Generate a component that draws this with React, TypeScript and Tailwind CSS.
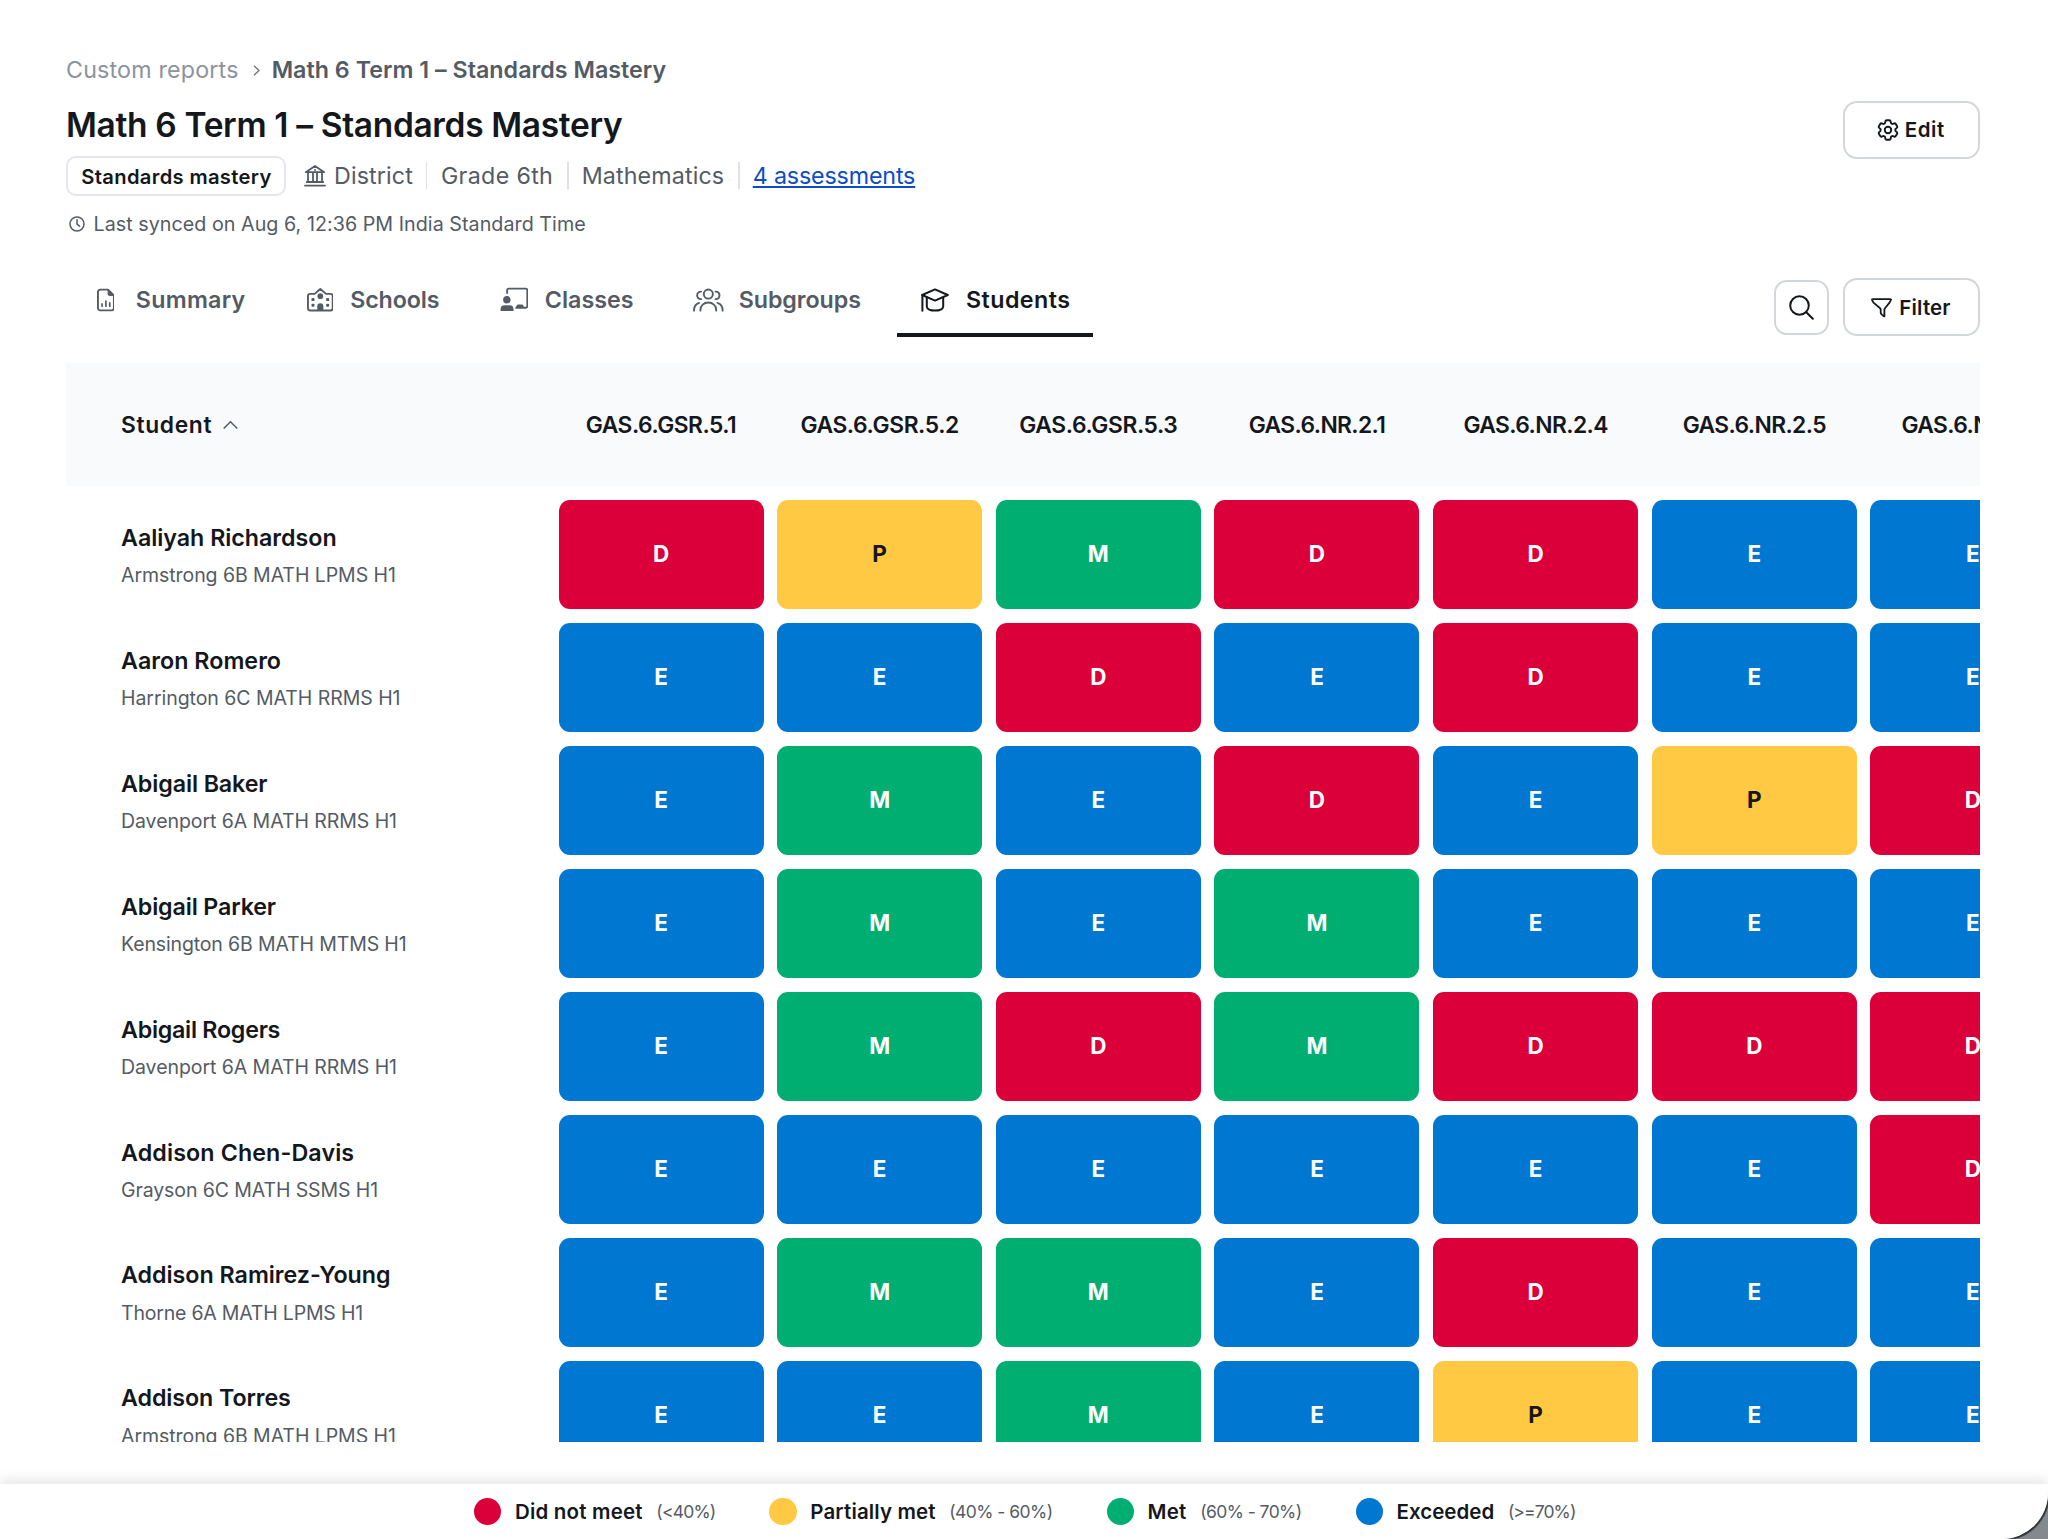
import type { ReactNode } from "react";

type Level = "D" | "P" | "M" | "E";

const levelClass: Record<Level, string> = {
  D: "bg-[#db0039] text-white",
  P: "bg-[#ffc943] text-[#14171b]",
  M: "bg-[#00ae72] text-white",
  E: "bg-[#0078d2] text-white",
};

const standards = [
  { name: "GAS.6.GSR.5.1", cls: "tracking-[-0.5px]" },
  { name: "GAS.6.GSR.5.2", cls: "tracking-[-0.38px]" },
  { name: "GAS.6.GSR.5.3", cls: "tracking-[-0.38px]" },
  { name: "GAS.6.NR.2.1", cls: "tracking-[-0.62px]" },
  { name: "GAS.6.NR.2.4", cls: "tracking-[-0.6px]" },
  { name: "GAS.6.NR.2.5", cls: "tracking-[-0.6px]" },
  { name: "GAS.6.NR.2.6", cls: "tracking-[-0.6px]" },
];

const students = [
  { name: "Aaliyah Richardson", nameCls: "tracking-[-0.03px]", group: "Armstrong 6B MATH LPMS H1", groupCls: "tracking-[-0.06px]", levels: "DPMDDEE" },
  { name: "Aaron Romero", nameCls: "tracking-[0.02px]", group: "Harrington 6C MATH RRMS H1", groupCls: "tracking-[-0.05px]", levels: "EEDEDEE" },
  { name: "Abigail Baker", nameCls: "tracking-[-0.1px]", group: "Davenport 6A MATH RRMS H1", groupCls: "tracking-[-0.06px]", levels: "EMEDEPD" },
  { name: "Abigail Parker", nameCls: "tracking-[-0.14px]", group: "Kensington 6B MATH MTMS H1", groupCls: "tracking-[-0.14px]", levels: "EMEMEEE" },
  { name: "Abigail Rogers", nameCls: "tracking-[-0.26px]", group: "Davenport 6A MATH RRMS H1", groupCls: "tracking-[-0.06px]", levels: "EMDMDDD" },
  { name: "Addison Chen-Davis", nameCls: "tracking-[0.12px]", group: "Grayson 6C MATH SSMS H1", groupCls: "tracking-[-0.1px]", levels: "EEEEEED" },
  { name: "Addison Ramirez-Young", nameCls: "tracking-[-0.02px]", group: "Thorne 6A MATH LPMS H1", groupCls: "tracking-[-0.2px]", levels: "EMMEDEE" },
  { name: "Addison Torres", nameCls: "tracking-[-0.09px]", group: "Armstrong 6B MATH LPMS H1", groupCls: "tracking-[-0.06px]", levels: "EEMEPEE" },
];

const DocumentIcon = () => (
  <svg className="h-6 w-[19px]" viewBox="0 0 19 24" fill="none" stroke="currentColor" strokeWidth="2" strokeLinecap="round" strokeLinejoin="round">
    <path d="M11.800 1H3.400A2.400 2.400 0 0 0 1 3.400v17.200A2.400 2.400 0 0 0 3.400 23h12.200a2.400 2.400 0 0 0 2.400-2.400V7.200z" />
    <path d="M11.800 1v4.800a1.400 1.400 0 0 0 1.400 1.400H18z" fill="currentColor" strokeWidth="1" />
    <path d="M5.400 16.200v2.400M9.500 13.200v5.400M13.600 15v3.600" strokeWidth="1.800" />
  </svg>
);

const SchoolIcon = () => (
  <svg className="h-[25px] w-7" viewBox="0 0 28 25" fill="none" stroke="currentColor" strokeWidth="2" strokeLinecap="round" strokeLinejoin="round">
    <path d="M8 6.600H3.200A2.200 2.200 0 0 0 1 8.800v13A2.200 2.200 0 0 0 3.200 24h21.600a2.200 2.200 0 0 0 2.200-2.200v-13a2.200 2.200 0 0 0-2.200-2.200H20L14 1.400z" />
    <circle cx="14" cy="9" r="3" fill="currentColor" stroke="none" />
    <path d="M10.800 24v-4.400a3.200 3.200 0 0 1 6.400 0V24z" fill="currentColor" stroke="none" />
    <g fill="currentColor" stroke="none">
      <rect x="4.700" y="11" width="3.200" height="3.200" rx="1" />
      <rect x="4.700" y="17" width="3.200" height="3.200" rx="1" />
      <rect x="20.100" y="11" width="3.200" height="3.200" rx="1" />
      <rect x="20.100" y="17" width="3.200" height="3.200" rx="1" />
    </g>
  </svg>
);

const ClassIcon = () => (
  <svg className="h-[25px] w-[29px]" viewBox="0 0 29 25" fill="none" stroke="currentColor" strokeWidth="1.900" strokeLinecap="round" strokeLinejoin="round">
    <path d="M7.300 5.800V3.200A1.800 1.800 0 0 1 9.100 1.400h17.100A1.800 1.800 0 0 1 28 3.200v16a1.800 1.800 0 0 1-1.800 1.800H16.600" />
    <circle cx="7" cy="12.800" r="3.800" fill="currentColor" stroke="none" />
    <path d="M.6 24.400v-2a4 4 0 0 1 4-4h5.200a4 4 0 0 1 4 4v2z" fill="currentColor" stroke="none" />
    <path d="M16.200 21.200l.8-2.200a2 2 0 0 1 1.900-1.300h3.200a2 2 0 0 1 1.900 1.300l.8 2.200z" fill="currentColor" stroke="none" />
  </svg>
);

const GroupIcon = () => (
  <svg className="h-[24px] w-[31px]" viewBox="0 0 31 24" fill="none" stroke="currentColor" strokeWidth="1.900" strokeLinecap="round">
    <circle cx="15.500" cy="6" r="4.600" />
    <path d="M7.500 22.800v-.9a8 7.400 0 0 1 16 0v.9" />
    <path d="M8.200 3.500C5.700 3.500 4.200 5 4.200 7.200s1.500 3.800 4 3.900M22.800 3.500c2.500 0 4 1.500 4 3.700s-1.500 3.800-4 3.900" />
    <path d="M1 22.800c0-3.700 1.700-6.800 5.200-7.900M30 22.800c0-3.700-1.700-6.800-5.200-7.900" />
  </svg>
);

const CapIcon = () => (
  <svg className="h-[24px] w-7" viewBox="0 0 28 24" fill="none" stroke="currentColor" strokeWidth="2" strokeLinecap="round" strokeLinejoin="round">
    <path d="M1.200 7 14 1.400 26.800 7 14 12.600z" />
    <path d="M1.400 7.200v15.600" />
    <path d="M5.800 9.600v9c0 2.400 3.600 4 8.200 4s8.200-1.600 8.200-4v-9" />
  </svg>
);

const BankIcon = () => (
  <svg className="h-[23px] w-[22px]" viewBox="0 0 22 23" fill="none" stroke="currentColor" strokeWidth="1.800" strokeLinecap="round" strokeLinejoin="round">
    <path d="M1.800 8.200 11 2l9.200 6.200zM4 9v8.400M9 9v8.400M13 9v8.400M18 9v8.400M2.800 18h16.400M1 21.600h20" />
    <circle cx="11" cy="6" r="1" fill="currentColor" stroke="none" />
  </svg>
);

const GearIcon = () => (
  <svg className="h-[26px] w-[26px]" viewBox="0 0 24 24" fill="none" stroke="currentColor" strokeWidth="1.750" strokeLinecap="round" strokeLinejoin="round">
    <path d="M9.594 3.940c.090-.542.560-.940 1.110-.940h2.593c.550 0 1.020.398 1.110.940l.213 1.281c.063.374.313.686.645.870.074.040.147.083.220.127.325.196.720.257 1.075.124l1.217-.456a1.125 1.125 0 0 1 1.370.490l1.296 2.247a1.125 1.125 0 0 1-.260 1.431l-1.003.827c-.293.241-.438.613-.430.992a7.723 7.723 0 0 1 0 .255c-.008.378.137.750.430.991l1.004.827c.424.350.534.955.260 1.430l-1.298 2.247a1.125 1.125 0 0 1-1.369.491l-1.217-.456c-.355-.133-.750-.072-1.076.124a6.470 6.470 0 0 1-.220.128c-.331.183-.581.495-.644.869l-.213 1.281c-.090.543-.560.940-1.110.940h-2.594c-.550 0-1.019-.398-1.110-.940l-.213-1.281c-.062-.374-.312-.686-.644-.870a6.520 6.520 0 0 1-.220-.127c-.325-.196-.720-.257-1.076-.124l-1.217.456a1.125 1.125 0 0 1-1.369-.490l-1.297-2.247a1.125 1.125 0 0 1 .260-1.431l1.004-.827c.292-.240.437-.613.430-.991a6.932 6.932 0 0 1 0-.255c.007-.380-.138-.751-.430-.992l-1.004-.827a1.125 1.125 0 0 1-.260-1.430l1.297-2.247a1.125 1.125 0 0 1 1.370-.491l1.216.456c.356.133.751.072 1.076-.124.072-.044.146-.086.220-.128.332-.183.582-.495.644-.869z" />
    <circle cx="12" cy="12" r="3" />
  </svg>
);

const FilterIcon = () => (
  <svg className="h-5 w-[21px]" viewBox="0 0 21 20" fill="none" stroke="currentColor" strokeWidth="1.800" strokeLinecap="round" strokeLinejoin="round">
    <path d="M1.600 1.200h17.800c.5 0 .7.500.5.900l-1.400 2.500-4.500 5.600c-.4.500-.6 1-.6 1.600v6.600l-2.200-1.500c-.8-.6-1.500-1.400-1.500-2.400v-2.700c0-.6-.2-1.100-.6-1.600L2.500 4.600 1.100 2.100c-.2-.4 0-.9.500-.9z" />
  </svg>
);

const SearchIcon = () => (
  <svg className="h-[25px] w-[25px]" viewBox="0 0 25 25" fill="none" stroke="currentColor" strokeWidth="2" strokeLinecap="round">
    <circle cx="10.500" cy="10.500" r="9.300" />
    <path d="m17.300 17.300 6.500 6.500" />
  </svg>
);

const ClockIcon = () => (
  <svg className="h-4 w-4" viewBox="0 0 16 16" fill="none" stroke="currentColor" strokeWidth="1.500" strokeLinecap="round" strokeLinejoin="round">
    <circle cx="8" cy="8" r="7" />
    <path d="M8 3.800V8.200l2.600 1.900" />
  </svg>
);

function Tab({ icon, label, labelCls, active = false }: { icon: ReactNode; label: string; labelCls: string; active?: boolean }) {
  return (
    <div
      className={
        "flex h-[74px] items-center border-b-4 pt-1 text-[23.25px] font-semibold leading-8 " +
        (active ? "border-[#14171b] text-[#14171b] " : "border-transparent text-[#545b64] ") +
        labelCls
      }
    >
      {icon}
      <span>{label}</span>
    </div>
  );
}

function LegendItem({ dot, label, labelCls, range, rangeCls }: { dot: string; label: string; labelCls: string; range: string; rangeCls: string }) {
  return (
    <div className={"flex items-center " + labelCls}>
      <span className={"size-[27.4px] rounded-full " + dot} />
      <span className="ml-[13.5px] text-[20.5px] font-semibold leading-7 text-[#14171b]">{label}</span>
      <span className={"ml-[13.5px] pt-px text-[17.5px] leading-7 text-[#545b64] " + rangeCls}>{range}</span>
    </div>
  );
}

const Divider = () => <span className="h-[27px] w-[1.5px] bg-[#dfe1e7]" />;

export default function App() {
  return (
    <div className="h-[1539px] w-[2048px] overflow-hidden bg-[#85888d] font-['Inter',sans-serif] text-[#14171b] antialiased">
      <div className="flex h-[1538.5px] w-[2047.5px] flex-col overflow-hidden rounded-br-[46px] bg-white whitespace-nowrap shadow-[0_0_1px_2px_#303236]">
        <header className="flex justify-between pr-[68px] pl-[66px]">
          <div className="pt-[50px]">
            <div className="flex h-10 items-center text-[23.25px] leading-8">
              <span className="tracking-[0.18px] text-[#8d939c]">Custom reports</span>
              <svg className="ml-[14px] h-[11px] w-[7px] text-[#727982]" viewBox="0 0 7 11" fill="none" stroke="currentColor" strokeWidth="1.5">
                <path d="m1 .7 5 4.800-5 4.800" />
              </svg>
              <span className="ml-[12px] font-semibold tracking-[0.02px] text-[#545b64]">Math 6 Term 1 – Standards Mastery</span>
            </div>
            <h1 className="mt-[9.7px] flex h-[50px] items-center text-[33.5px] font-semibold leading-10 tracking-[-0.34px]">
              Math 6 Term 1 – Standards Mastery
            </h1>
            <div className="mt-[6.3px] flex h-10 items-center text-[23.25px] leading-8 text-[#545b64]">
              <span className="mr-[17.5px] flex h-10 w-[220px] items-center justify-center rounded-[10px] border-2 border-[#e6e7ee] pt-[3px] pl-px text-[20.2px] font-semibold tracking-[0.33px] text-[#14171b]">
                Standards mastery
              </span>
              <BankIcon />
              <span className="mr-[13px] ml-[8.5px] tracking-[0.12px]">District</span>
              <Divider />
              <span className="mr-[14px] ml-[13.5px] tracking-[0.34px]">Grade 6th</span>
              <Divider />
              <span className="mr-[14px] ml-[13px] tracking-[0.12px]">Mathematics</span>
              <Divider />
              <a className="ml-[13px] tracking-[-0.16px] text-[#0b4ccb] underline decoration-2 underline-offset-[2px]">4 assessments</a>
            </div>
            <div className="mt-[13px] flex h-[30px] items-center pl-[3px] text-[19.7px] leading-7 tracking-[0.04px] text-[#545b64]">
              <ClockIcon />
              <span className="ml-[8.5px]">Last synced on Aug 6, 12:36 PM India Standard Time</span>
            </div>
          </div>
          <button className="mt-[101px] flex h-[58px] w-[137px] items-center justify-center gap-[3.5px] rounded-[14px] border-2 border-[#d3d7dc] pr-[2px] text-[20.5px] font-semibold tracking-[0.5px]">
            <GearIcon />
            Edit
          </button>
        </header>

        <nav className="mt-[23.9px] flex items-start justify-between pr-[68px] pl-[96.5px]">
          <div className="flex">
            <Tab icon={<DocumentIcon />} label="Summary" labelCls="w-[149px] gap-[21.5px] tracking-[0.26px]" />
            <div className="ml-[61px]">
              <Tab icon={<SchoolIcon />} label="Schools" labelCls="w-[133px] gap-[17px] tracking-[-0.1px]" />
            </div>
            <div className="ml-[60px]">
              <Tab icon={<ClassIcon />} label="Classes" labelCls="w-[134px] gap-[17px] tracking-[0.01px]" />
            </div>
            <div className="ml-[59.5px]">
              <Tab icon={<GroupIcon />} label="Subgroups" labelCls="w-[168px] gap-[15px] tracking-[-0.05px]" />
            </div>
            <div className="ml-[35.5px]">
              <Tab active icon={<CapIcon />} label="Students" labelCls="w-[196px] gap-[17px] pl-[24.5px] tracking-[0.44px]" />
            </div>
          </div>
          <div className="flex items-center gap-[14px] pt-[15.5px]">
            <button className="flex size-[54.5px] items-center justify-center rounded-[13px] border-2 border-[#d3d7dc]">
              <SearchIcon />
            </button>
            <button className="flex h-[58px] w-[137px] items-center justify-center gap-[7px] rounded-[14px] border-2 border-[#d3d7dc] pt-px text-[20.5px] font-semibold tracking-[0.16px]">
              <FilterIcon />
              Filter
            </button>
          </div>
        </nav>

        <main className="mt-[26.5px] mr-[68px] ml-[66px] h-[1078.7px] overflow-hidden">
          <div className="flex h-[123px] items-center bg-[#f9fafc] text-[22.8px] font-semibold leading-8">
            <div className="flex w-[492.5px] shrink-0 items-center gap-[10.5px] pl-[55px]">
              <span className="tracking-[0.65px]">Student</span>
              <svg className="h-2 w-[15px] text-[#545b64]" viewBox="0 0 15 8" fill="none" stroke="currentColor" strokeWidth="1.5">
                <path d="m.7 7.500 6.800-6.700 6.800 6.700" />
              </svg>
            </div>
            <div className="flex gap-[13.67px]">
              {standards.map((s) => (
                <div key={s.name} className={"w-[205px] shrink-0 text-center " + s.cls}>
                  {s.name}
                </div>
              ))}
            </div>
          </div>
          {students.map((s) => (
            <div key={s.name} className="flex h-[122.97px]">
              <div className="w-[492.5px] shrink-0 pt-[34.3px] pl-[55px]">
                <div className={"h-[34px] text-[23.25px] font-semibold leading-[34px] " + s.nameCls}>{s.name}</div>
                <div className={"mt-[5.7px] h-[30px] text-[19.5px] leading-[30px] text-[#545b64] " + s.groupCls}>{s.group}</div>
              </div>
              <div className="flex gap-[13.67px] pt-[13.4px]">
                {s.levels.split("").map((l, i) => (
                  <div
                    key={i}
                    className={
                      "flex h-[109.3px] w-[205px] shrink-0 items-center justify-center rounded-[11px] text-[22.5px] font-bold leading-8 " +
                      levelClass[l as Level]
                    }
                  >
                    {l}
                  </div>
                ))}
              </div>
            </div>
          ))}
        </main>

        <footer className="mt-[41.5px] flex grow items-center gap-[54px] rounded-br-[46px] bg-white pt-px pl-[474px] shadow-[0_-3px_14px_rgba(0,0,0,0.12)]">
          <LegendItem dot="bg-[#db0039]" label="Did not meet" labelCls="tracking-[0.2px]" range="(<40%)" rangeCls="tracking-[-0.8px]" />
          <LegendItem dot="bg-[#ffc943]" label="Partially met" labelCls="tracking-[0.14px]" range="(40% - 60%)" rangeCls="tracking-[-0.54px]" />
          <LegendItem dot="bg-[#00ae72]" label="Met" labelCls="tracking-[0.3px]" range="(60% - 70%)" rangeCls="tracking-[-0.56px]" />
          <LegendItem dot="bg-[#0078d2]" label="Exceeded" labelCls="tracking-[0.05px]" range="(>=70%)" rangeCls="tracking-[-0.9px]" />
        </footer>
      </div>
    </div>
  );
}
